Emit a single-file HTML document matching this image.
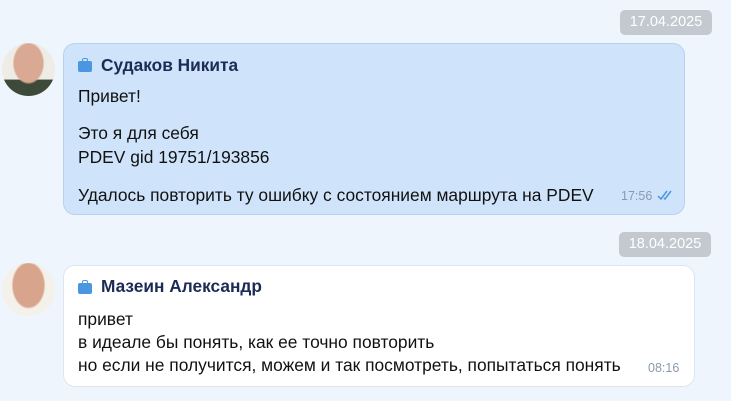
<!DOCTYPE html>
<html><head><meta charset="utf-8"><style>
body{margin:0;width:731px;height:401px;overflow:hidden;background:#eef5fc;font-family:"Liberation Sans",Arial,sans-serif;position:relative}
.abs{position:absolute}
.date{background:#c4c9cf;color:#fff;font-size:14.5px;border-radius:5px;text-align:center;line-height:25px}
.bub{border-radius:12px;box-sizing:border-box}
.name{font-weight:bold;font-size:17.3px;color:#1b2b55;white-space:nowrap}
.t{font-size:17.4px;color:#111;white-space:nowrap}
.bag{width:14px;height:11px;background:#4a96e0;border-radius:2px}
.bag:before{content:"";position:absolute;left:4px;top:-3px;width:4px;height:2px;border:1.5px solid #4a96e0;border-bottom:none;border-radius:2px 2px 0 0}
.time{font-size:12.5px;color:#8a9aab}
</style></head><body>
<div class="abs date" style="left:620px;top:10px;width:92px;height:25px">17.04.2025</div>
<div class="abs date" style="left:619px;top:232px;width:92px;height:25px">18.04.2025</div>

<div class="abs" style="left:2px;top:43px;width:53px;height:53px;border-radius:50%;background:radial-gradient(ellipse 30% 40% at 50% 38%,#d9a994 0 90%,transparent 100%),linear-gradient(#efece6 0 68%,#3d4a3a 70%);overflow:hidden"></div>
<div class="abs bub" style="left:63px;top:43px;width:622px;height:172px;background:#cfe4fb;border:1px solid #b7d2ee"></div>
<div class="abs bag" style="left:78px;top:61px"></div>
<div class="abs name" style="left:101px;top:55px">Судаков Никита</div>
<div class="abs t" style="left:78px;top:86px">Привет!</div>
<div class="abs t" style="left:78px;top:123px">Это я для себя</div>
<div class="abs t" style="left:78px;top:147px">PDEV gid 19751/193856</div>
<div class="abs t" style="left:78px;top:185px">Удалось повторить ту ошибку с состоянием маршрута на PDEV</div>
<div class="abs time" style="left:621px;top:189px">17:56</div>
<svg class="abs" style="left:657px;top:190px" width="16" height="10" viewBox="0 0 16 10"><path d="M1 6l3 3 6-8M7 8l1 1 6-8" fill="none" stroke="#4a96e0" stroke-width="1.5"/></svg>

<div class="abs" style="left:2px;top:263px;width:53px;height:53px;border-radius:50%;background:radial-gradient(ellipse 32% 45% at 50% 42%,#d8a48c 0 90%,transparent 100%),#f4f1ea;overflow:hidden"></div>
<div class="abs bub" style="left:63px;top:265px;width:632px;height:122px;background:#fff;border:1px solid #dde6ef"></div>
<div class="abs bag" style="left:78px;top:283px"></div>
<div class="abs name" style="left:101px;top:276px">Мазеин Александр</div>
<div class="abs t" style="left:78px;top:309px">привет</div>
<div class="abs t" style="left:78px;top:332px">в идеале бы понять, как ее точно повторить</div>
<div class="abs t" style="left:78px;top:355px">но если не получится, можем и так посмотреть, попытаться понять</div>
<div class="abs time" style="left:648px;top:361px">08:16</div>
</body></html>
